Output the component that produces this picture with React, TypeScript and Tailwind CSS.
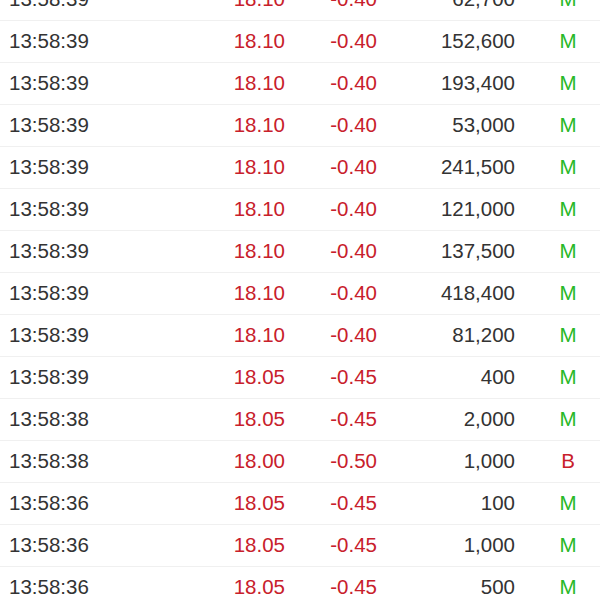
import React from "react";

type Row = [string, string, string, string, "M" | "B"];

const rows: Row[] = [
  ["13:58:39", "18.10", "-0.40", "62,700", "M"],
  ["13:58:39", "18.10", "-0.40", "152,600", "M"],
  ["13:58:39", "18.10", "-0.40", "193,400", "M"],
  ["13:58:39", "18.10", "-0.40", "53,000", "M"],
  ["13:58:39", "18.10", "-0.40", "241,500", "M"],
  ["13:58:39", "18.10", "-0.40", "121,000", "M"],
  ["13:58:39", "18.10", "-0.40", "137,500", "M"],
  ["13:58:39", "18.10", "-0.40", "418,400", "M"],
  ["13:58:39", "18.10", "-0.40", "81,200", "M"],
  ["13:58:39", "18.05", "-0.45", "400", "M"],
  ["13:58:38", "18.05", "-0.45", "2,000", "M"],
  ["13:58:38", "18.00", "-0.50", "1,000", "B"],
  ["13:58:36", "18.05", "-0.45", "100", "M"],
  ["13:58:36", "18.05", "-0.45", "1,000", "M"],
  ["13:58:36", "18.05", "-0.45", "500", "M"],
];

export default function App() {
  return (
    <div className="w-[600px] h-[600px] overflow-hidden bg-white" style={{ fontFamily: '"Liberation Sans", Arial, sans-serif' }}>
      <div className="-mt-[21px]">
        {rows.map((r, i) => (
          <div
            key={i}
            className="grid grid-cols-[200px_85px_92px_159px_64px] items-center h-[42px] pb-px border-b border-[#f0f0f0] text-[20.5px] leading-none"
          >
            <div className="pl-[9px] text-[#333333]">{r[0]}</div>
            <div className="text-right text-[#c8202b]">{r[1]}</div>
            <div className="text-right text-[#c8202b]">{r[2]}</div>
            <div className="text-right pr-[21px] text-[#333333]">{r[3]}</div>
            <div className={`text-center ${r[4] === "B" ? "text-[#c8202b]" : "text-[#27b827]"}`}>{r[4]}</div>
          </div>
        ))}
      </div>
    </div>
  );
}
